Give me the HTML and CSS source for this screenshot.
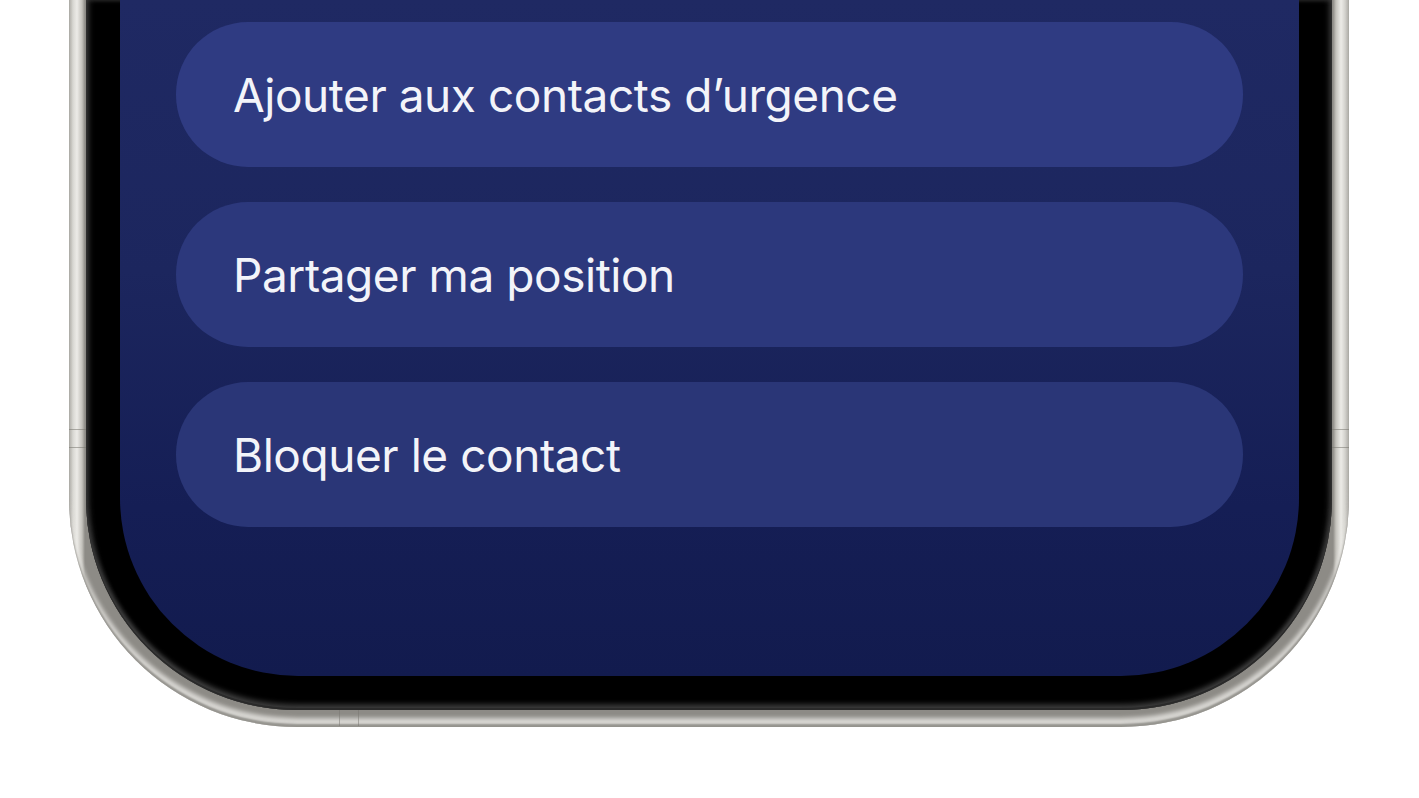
FILE: index.html
```html
<!DOCTYPE html>
<html lang="fr">
<head>
<meta charset="utf-8">
<title>Contact</title>
<link rel="stylesheet" href="styles.css">
</head>
<body>
<div class="page">
  <div class="frame">
    <span class="seam seam-left-a"></span>
    <span class="seam seam-left-b"></span>
    <span class="seam seam-right-a"></span>
    <span class="seam seam-right-b"></span>
    <span class="seam-v seam-bottom-a"></span>
    <span class="seam-v seam-bottom-b"></span>
    <div class="bezel">
      <div class="screen">
        <div class="actions">
          <div class="pill pill-1">Ajouter aux contacts d’urgence</div>
          <div class="pill pill-2">Partager ma position</div>
          <div class="pill pill-3">Bloquer le contact</div>
        </div>
      </div>
    </div>
  </div>
</div>
</body>
</html>
```

FILE: styles.css
```css
html, body {
  margin: 0;
  padding: 0;
  background: #ffffff;
}
.page {
  width: 1419px;
  height: 798px;
  overflow: hidden;
  padding-left: 69px;
  box-sizing: border-box;
}
.frame {
  position: relative;
  width: 1280px;
  height: 727px;
  box-sizing: border-box;
  padding: 0 17px 17px 17px;
  border-radius: 0 0 228px 228px;
  background: linear-gradient(90deg, #9e9c97 0px, #d9d8d3 4px, #ecebe7 8px, #c4c2bc 13px, #8d8b86 16px, #8d8b86 1264px, #c4c2bc 1267px, #ecebe7 1272px, #d4d3ce 1276px, #9e9c97 1280px);
  box-shadow: inset 0 -3px 2px rgba(120,118,112,0.7), inset 0 -9px 4px rgba(235,234,230,0.8);
}
.seam {
  position: absolute;
  width: 17px;
  height: 1px;
  background: rgba(120,118,112,0.55);
  z-index: 2;
}
.seam-left-a { left: 0; top: 429px; }
.seam-left-b { left: 0; top: 447px; }
.seam-right-a { right: 0; top: 429px; }
.seam-right-b { right: 0; top: 447px; }
.seam-v {
  position: absolute;
  width: 1px;
  height: 16px;
  bottom: 1px;
  background: rgba(120,118,112,0.5);
  z-index: 2;
}
.seam-bottom-a { left: 270px; }
.seam-bottom-b { left: 289px; }
.bezel {
  height: 100%;
  box-sizing: border-box;
  padding: 0 33px 34px 34px;
  background: #000;
  border-radius: 0 0 211px 211px;
  box-shadow: inset 0 -2px 0 #2a2a2a, inset 0 -6px 5px rgba(90,90,90,0.6), inset 4px 0 5px rgba(80,80,80,0.45), inset -4px 0 5px rgba(80,80,80,0.45);
}
.screen {
  height: 100%;
  box-sizing: border-box;
  padding: 22px 56px 0 56px;
  border-radius: 0 0 178px 178px;
  background: linear-gradient(180deg, #1f2963 0%, #1c265e 40%, #151e55 75%, #121b4e 100%);
}
.actions {
  display: flex;
  flex-direction: column;
  gap: 35px;
}
.pill {
  height: 145px;
  border-radius: 72px;
  display: flex;
  align-items: center;
  padding-left: 57px;
  color: #f3f4f9;
  font-family: Inter, "Noto Sans", sans-serif;
  font-size: 46px;
  font-weight: 400;
  letter-spacing: -0.45px;
}
.pill-1 { background: #2f3b82; }
.pill-2 { background: #2c387c; }
.pill-3 { background: #2a3677; }
```
